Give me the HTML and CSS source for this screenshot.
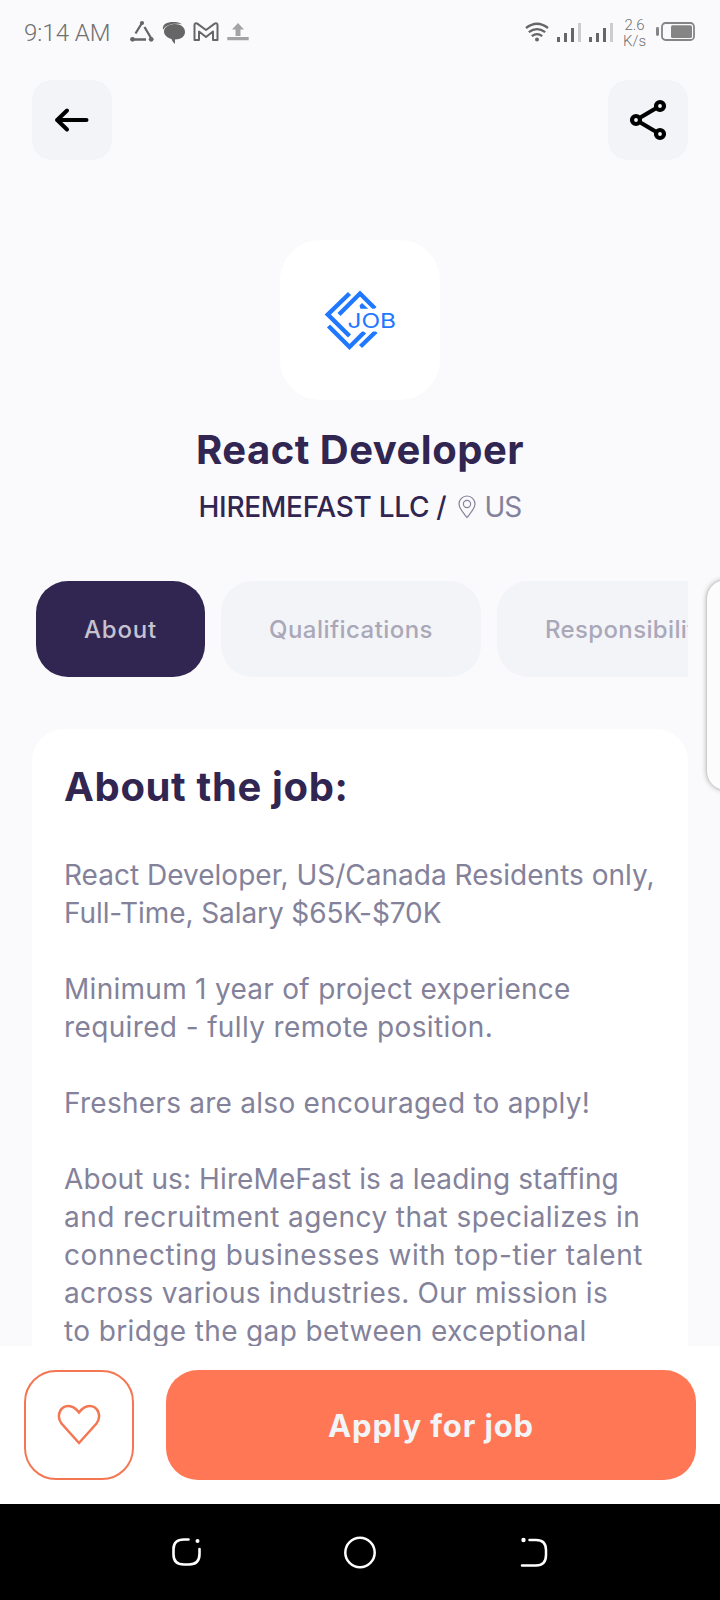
FILE: index.html
```html
<!DOCTYPE html>
<html lang="en">
<head>
<meta charset="utf-8">
<title>React Developer</title>
<link rel="stylesheet" href="styles.css">
</head>
<body>
<div class="screen">
  <header class="status">
    <span class="status-time">9:14 AM</span>
    <svg class="status-apps" width="120" height="26" viewBox="0 0 120 26">
      <g fill="#666" stroke="#666">
        <path d="M5.500 14.500 12 4M14.500 8 21 19M4 20.500H16" fill="none" stroke-width="2.300"/>
        <circle cx="12" cy="4" r="2.100" stroke="none"/><circle cx="2.500" cy="20.300" r="2.400" stroke="none"/><circle cx="21.200" cy="20.300" r="2.400" stroke="none"/>
      </g>
      <path d="M33 11C32 5 37 3 43 3c4 0 7 .4 9 2.300-8-1.300-16 0-19 5.700z" fill="#666"/>
      <path d="M44.500 5c6.500 0 10.500 3.500 10.500 8s-4 7.500-10 7.500v4.500c-2.500-2-3-4-3.500-5C37 18.500 34 16 34 12.500s4-7.500 10.500-7.500z" fill="#666"/>
      <path d="M64.500 21V6c0-1.600 1.500-2.400 2.800-1.400L76 11l8.700-6.400C86 3.600 87.500 4.400 87.500 6v15H83V12.500L76 18l-7-5.500V21z" fill="none" stroke="#666" stroke-width="2" stroke-linejoin="round"/>
      <path d="M108 4l6 6.500h-3.500V17h-5v-6.500H102zM97.300 18h21.400v3.300H97.300z" fill="#a3a3a3"/>
    </svg>
    <svg class="status-signal" width="90" height="24" viewBox="0 0 90 24">
      <g fill="none" stroke="#666" stroke-width="2.300">
        <path d="M1 9Q12 .5 23 9M3.800 13.200Q12 7 20.200 13.200M6.800 17.200Q12 13 17.200 17.200"/>
      </g>
      <circle cx="12" cy="20.500" r="2" fill="#666"/>
      <g fill="#666"><path d="M32 18h3v5h-3zM39 14h3v9h-3zM46 9h3v14h-3zM64 18h3v5h-3zM71 14h3v9h-3zM78 9h3v14h-3z"/></g>
      <path d="M53 4h3v19h-3zM85 4h3v19h-3z" fill="#ccc"/>
    </svg>
    <span class="status-rate"><span>2.6</span><span>K/s</span></span>
    <svg class="status-battery" width="40" height="20" viewBox="0 0 40 20">
      <rect y="5" width="3" height="9" rx="1.400" fill="#858585"/>
      <rect x="6" y="1" width="32" height="17" rx="3.500" fill="none" stroke="#858585" stroke-width="1.800"/>
      <rect x="15" y="3.200" width="21" height="12.800" rx="1.500" fill="#858585"/>
    </svg>
  </header>

  <nav class="toolbar">
    <button class="tool" aria-label="Back">
      <svg width="80" height="80" viewBox="0 0 80 80"><path d="M54.500 40H25M35 30.500 25.200 40l9.800 9.500" fill="none" stroke="#000" stroke-width="4" stroke-linecap="round" stroke-linejoin="round"/></svg>
    </button>
    <button class="tool" aria-label="Share">
      <svg width="80" height="80" viewBox="0 0 80 80" fill="none" stroke="#000" stroke-width="4.200"><path d="M31.500 38 48 28.200M31.500 42 48 51.800"/><circle cx="28" cy="40" r="4"/><circle cx="52" cy="26" r="4"/><circle cx="52" cy="54" r="4"/></svg>
    </button>
  </nav>

  <section class="company">
    <div class="logo">
      <svg width="160" height="160" viewBox="0 0 160 160">
        <g fill="none" stroke="#1f78ff" stroke-width="4.400">
          <path d="M69.500 53.500 47.800 74.500 69.500 96M59 74.500 80 53.500 95 68.500M48.500 86l21 21L84.500 92M80.500 106.500 96 91.500"/>
        </g>
        <path d="M79.500 65.500 82 63l6.500 6h-8z" fill="#1f78ff"/>
        <path d="M78 70h23M78 90.200h22" stroke="#fff" stroke-width="2.400"/>
        <text class="logo-text" x="67.500" y="87.500" textLength="48.500" lengthAdjust="spacingAndGlyphs">JOB</text>
      </svg>
    </div>
    <h1 class="title">React Developer</h1>
    <div class="meta">
      <span class="company-name">HIREMEFAST LLC /</span>
      <svg width="18" height="24" viewBox="0 0 18 24" fill="none" stroke="#83829a" stroke-width="1.200"><path d="M9 22.500C5.500 18 1 13.500 1 9a8 8 0 0 1 16 0c0 4.500-4.500 9-8 13.500z"/><circle cx="9" cy="9" r="3.600"/></svg>
      <span class="place">US</span>
    </div>
  </section>

  <div class="tabs">
    <span class="tab tab-active">About</span>
    <span class="tab tab-qualifications">Qualifications</span>
    <span class="tab tab-responsibilities">Responsibilities</span>
  </div>

  <main class="card">
    <h2 class="card-title">About the job:</h2>
    <div class="copy">
      <p class="intro">React Developer, US/Canada Residents only,<br><span class="salary">Full-Time, Salary $65K-$70K</span></p>
      <p class="terms">Minimum 1 year of project experience<br><span class="remote">required - fully remote position.</span></p>
      <p class="freshers">Freshers are also encouraged to apply!</p>
      <p class="agency"><span class="lead">About us: HireMeFast is a leading staffing</span><br>and recruitment agency that specializes in<br><span class="connect">connecting businesses with top-tier talent</span><br><span class="mission">across various industries. Our mission is</span><br><span class="bridge">to bridge the gap between exceptional</span></p>
    </div>
  </main>

  <footer class="actions">
    <button class="like" aria-label="Save">
      <svg width="44" height="44" viewBox="0 0 44 44"><path d="M22 40 4.500 20.500C-1 13 3 3 11.500 3c4.500 0 7.500 2.500 10.500 6.500C25 5.500 28 3 32.500 3c8.500 0 12.500 10 7 17.500z" fill="none" stroke="#f47653" stroke-width="2.500"/></svg>
    </button>
    <button class="apply">Apply for job</button>
  </footer>
  <div class="navbar">
    <svg class="nav-recent" width="32" height="32" viewBox="0 0 32 32" fill="none" stroke="#fff" stroke-width="2.600" stroke-linecap="round"><path d="M17.500 3.500H13Q2.500 3.500 2.500 13v5.500Q2.500 28.500 13 28.500h5Q28.500 28.500 28.500 18v-5"/><circle cx="26.500" cy="5" r="2" fill="#fff" stroke="none"/></svg>
    <svg width="34" height="34" viewBox="0 0 34 34" fill="none" stroke="#fff" stroke-width="2.500"><circle cx="17" cy="17.500" r="14.700"/></svg>
    <svg width="32" height="32" viewBox="0 0 32 32" fill="none" stroke="#fff" stroke-width="2.500" stroke-linecap="round"><path d="M10.500 4H17Q27 4 27 14v5Q27 29.500 17 29.500H3"/><circle cx="4.500" cy="4" r="2.200" fill="#fff" stroke="none"/></svg>
  </div>
  <div class="edge-handle"></div>
</div>
</body>
</html>
```
FILE: styles.css
```css
* { box-sizing: border-box; }
body { margin: 0; font-family: Inter, "Open Sans", sans-serif; color: #312651; background: #fafafc; }
button { border: 0; padding: 0; font: inherit; display: flex; align-items: center; justify-content: center; }
svg { display: block; flex: none; }

.screen { position: relative; width: 720px; height: 1600px; overflow: hidden; display: flex; flex-direction: column; }

.status { height: 64px; display: flex; padding: 19px 0 0 24px; color: #707070; flex: none; }
.status-time { width: 106px; font: 300 24px/28px Roboto, sans-serif; white-space: nowrap; }
.status-signal { margin-left: 275px; }
.status-rate { margin: -2px 0 0 7px; width: 25px; font: 300 15px/16px Roboto, sans-serif; display: flex; flex-direction: column; align-items: center; }
.status-battery { margin: 3px 0 0 9px; }

.toolbar { display: flex; justify-content: space-between; padding: 16px 32px 0; flex: none; }
.tool { width: 80px; height: 80px; border-radius: 20px; background: #f3f4f8; }

.company { display: flex; flex-direction: column; align-items: center; padding-top: 80px; flex: none; }
.logo { width: 160px; height: 160px; border-radius: 40px; background: #fff; }
.logo-text { font: 400 20px Inter, sans-serif; fill: #1f78ff; }
.title { margin: 26px 0 0; font-size: 40px; line-height: 48px; font-weight: 650; letter-spacing: 0.5px; white-space: nowrap; }
.meta { display: flex; align-items: center; margin-top: 16px; height: 34px; font-size: 28px; line-height: 34px; white-space: nowrap; }
.company-name { font-weight: 500; letter-spacing: -0.3px; margin-right: 12px; }
.place { color: #83829a; letter-spacing: -0.9px; margin-left: 8px; }

.tabs { display: flex; gap: 16px; margin: 57px 32px 0; padding-left: 4px; height: 96px; overflow: hidden; flex: none; }
.tab { flex: none; padding: 1px 48px 0; line-height: 96px; border-radius: 32px; background: #f3f4f8; color: #aaa8b8; font-size: 24px; font-weight: 500; white-space: nowrap; }
.tab-active { background: #312651; color: #c6c2d0; letter-spacing: 0.81px; }
.tab-qualifications { letter-spacing: 0.455px; }
.tab-responsibilities { letter-spacing: 0.35px; }

.card { margin: 52px 32px 0; padding: 34px 32px 0; background: #fff; border-radius: 32px 32px 0 0; flex: 1; min-height: 0; overflow: hidden; }
.card-title { margin: 0; font-size: 40px; line-height: 48px; font-weight: 650; letter-spacing: 0.65px; white-space: nowrap; }
.copy { margin-top: 45px; font-size: 28px; line-height: 38px; color: #83829a; white-space: nowrap; }
.copy p { margin: 0 0 38px; }
.intro { letter-spacing: 0.01px; }
.salary { letter-spacing: -0.09px; }
.terms { letter-spacing: 0.28px; }
.remote { letter-spacing: 0.37px; }
.freshers { letter-spacing: 0.26px; }
.agency { letter-spacing: 0.43px; }
.lead { letter-spacing: 0.1px; }
.connect { letter-spacing: 0.55px; }
.mission { letter-spacing: 0.25px; }
.bridge { letter-spacing: 0.37px; }

.actions { height: 158px; padding: 24px; background: #fff; display: flex; gap: 32px; flex: none; }
.like { width: 110px; height: 110px; border: 2px solid #f47653; border-radius: 32px; background: #fff; }
.apply { flex: 1; height: 110px; border-radius: 32px; background: #ff7754; color: #f3f4f8; font-size: 31px; font-weight: 700; letter-spacing: 0.88px; }

.navbar { height: 96px; background: #000; display: flex; align-items: center; justify-content: center; gap: 142px; flex: none; }
.nav-recent { margin: 0 -2px 0 2px; }
.edge-handle { position: absolute; left: 706px; top: 579px; width: 40px; height: 212px; border: 1px solid #ccc; border-radius: 24px; background: #fcfcfc; box-shadow: 0 0 5px #bbb; }
```
